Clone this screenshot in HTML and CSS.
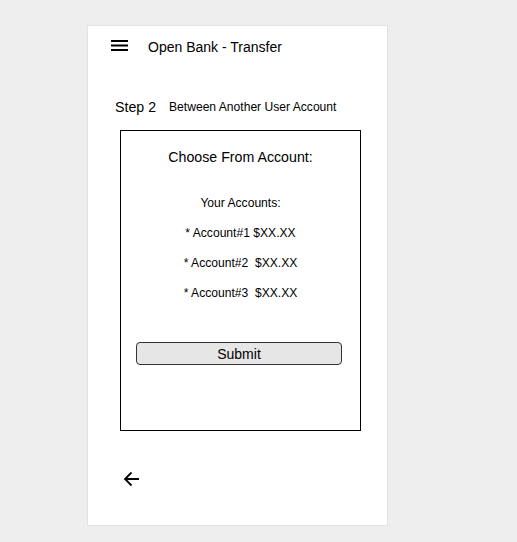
FILE: index.html
```html
<!DOCTYPE html>
<html>
<head>
<meta charset="utf-8">
<link rel="stylesheet" href="styles.css">
</head>
<body>
<div class="card">
  <div class="header">
    <svg class="menu" width="17" height="12" viewBox="0 0 17 12"><rect x="0" y="0" width="17" height="2" fill="#000"/><rect x="0" y="4.5" width="17" height="2" fill="#000"/><rect x="0" y="9" width="17" height="2" fill="#000"/></svg>
    <span class="title">Open Bank - Transfer</span>
  </div>
  <div class="step">
    <span class="step-num">Step 2</span>
    <span class="step-desc">Between Another User Account</span>
  </div>
  <div class="box">
    <div class="box-title">Choose From Account:</div>
    <div class="accounts-label">Your Accounts:</div>
    <div class="acct">* Account#1 $XX.XX</div>
    <div class="acct">* Account#2  $XX.XX</div>
    <div class="acct">* Account#3  $XX.XX</div>
    <button class="submit">Submit</button>
  </div>
  <svg class="back" width="17" height="16" viewBox="0 0 17 16"><path d="M16 8H2M8.5 1.5L2 8l6.5 6.5" fill="none" stroke="#000" stroke-width="1.8"/></svg>
</div>
</body>
</html>
```
FILE: styles.css
```css
html, body {
  margin: 0;
  padding: 0;
  background: #eeeeee;
  font-family: "Liberation Sans", Arial, sans-serif;
  color: #000;
}
.card {
  margin: 25px 0 0 87px;
  width: 299px;
  height: 499px;
  background: #fff;
  border: 1px solid #e2e2e2;
  display: flex;
  flex-direction: column;
}
.header {
  height: 39px;
  display: flex;
  align-items: center;
  padding-left: 23px;
}
.menu {
  display: block;
  margin-top: 1px;
}
.title {
  margin-left: 20px;
  font-size: 14px;
  margin-top: 2px;
}
.step {
  margin-top: 32px;
  height: 20px;
  display: flex;
  align-items: center;
  padding-left: 27px;
}
.step-num {
  font-size: 14.2px;
}
.step-desc {
  margin-left: 13px;
  font-size: 12.1px;
}
.box {
  margin: 13px 0 0 32px;
  width: 239px;
  height: 299px;
  border: 1px solid #000;
  display: flex;
  flex-direction: column;
  align-items: center;
}
.box-title {
  margin-top: 17px;
  line-height: 18px;
  font-size: 14.2px;
}
.accounts-label {
  margin-top: 28px;
  line-height: 18px;
  font-size: 12.1px;
}
.acct {
  margin-top: 12px;
  line-height: 18px;
  font-size: 12.1px;
  white-space: pre;
}
.submit {
  align-self: flex-start;
  margin: 40px 0 0 15px;
  width: 206px;
  height: 23px;
  border: 1px solid #333;
  border-radius: 4px;
  background: #e6e6e6;
  font-family: "Liberation Sans", Arial, sans-serif;
  font-size: 14px;
  padding: 0;
  color: #000;
}
.back {
  display: block;
  margin: 40px 0 0 35px;
}
```
